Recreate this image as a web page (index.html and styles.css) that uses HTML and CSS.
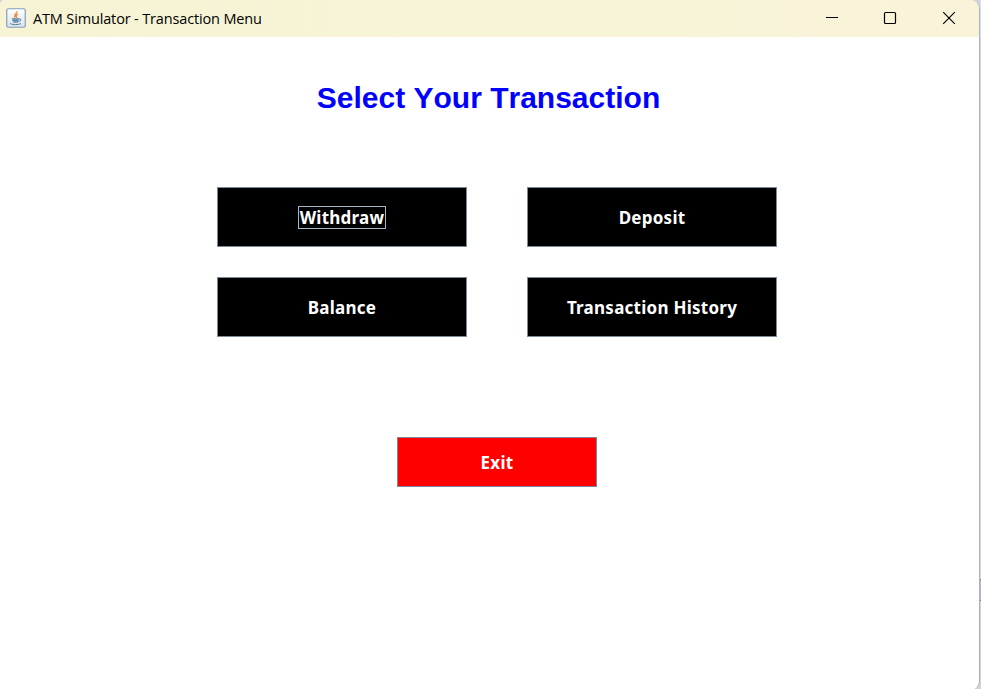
FILE: index.html
```html
<!DOCTYPE html>
<html lang="en">
<head>
<meta charset="utf-8">
<title>ATM Simulator - Transaction Menu</title>
<link rel="stylesheet" href="styles.css">
</head>
<body>
<div class="window">
  <header class="titlebar">
    <svg class="app-icon" width="20" height="20" viewBox="0 0 20 20" fill="none">
      <defs><linearGradient id="g" x2="0" y2="1"><stop stop-color="#fefefe"/><stop offset="1" stop-color="#d9e2ec"/></linearGradient></defs>
      <rect x=".75" y=".75" width="18.5" height="18.5" rx="1.5" fill="url(#g)" stroke="#829fba" stroke-width="1.2"/>
      <path d="M10.6 3.2c1.5 2-3.7 3.2-1.4 6.3M12 6.1c-2 1-2.2 1.8-1.2 3.7" stroke="#ee9145" stroke-width="1.5"/>
      <path d="M5.9 10.7h7.3l-1 3.4H7z" fill="#92afc8"/>
      <path d="M5.8 10.8h7.3M6.7 12.5h5.6M7.3 14.2h4.8M4.1 15.6c2.5 1.4 8.2 1.4 10.8 0M13 11c3-.6 2.2 2.1-.5 2.5" stroke="#55809f" stroke-width="1"/>
    </svg>
    <span class="caption">ATM Simulator - Transaction Menu</span>
    <nav class="controls">
      <svg width="58" height="36" viewBox="0 0 58 36" fill="none" stroke="#000"><path d="M23 17.5h12"/></svg>
      <svg width="58" height="36" viewBox="0 0 58 36" fill="none" stroke="#000" stroke-width="1.2"><rect x="23.5" y="12.5" width="11" height="11" rx="1"/></svg>
      <svg width="60" height="36" viewBox="0 0 60 36" fill="none" stroke="#000" stroke-width="1.15"><path d="M24.2 12.2l11.6 11.6M35.8 12.2L24.2 23.8"/></svg>
    </nav>
  </header>
  <main class="content">
    <h1 class="heading">Select Your Transaction</h1>
    <div class="menu">
      <button class="btn"><span class="focused">Withdraw</span></button>
      <button class="btn">Deposit</button>
      <button class="btn">Balance</button>
      <button class="btn">Transaction History</button>
    </div>
    <button class="btn exit">Exit</button>
  </main>
</div>
<div class="backdrop"></div>
</body>
</html>
```
FILE: styles.css
```css
* { box-sizing: border-box; }
body {
  margin: 0;
  width: 981px;
  height: 689px;
  display: flex;
  overflow: hidden;
  background: #d3d4d7;
}
.window {
  width: 980px;
  height: 690px;
  border-right: 1px solid #b0b1b5;
  border-radius: 5px 9px 9px 2px;
  background: #fff;
  overflow: hidden;
}
.titlebar {
  height: 37px;
  display: flex;
  align-items: flex-start;
  background: linear-gradient(90deg, #f6f4d5, #f8f4d8 70%, #f9f3da);
}
.app-icon { margin: 8px 7px 0 6px; }
.caption {
  font: 14.5px/38px "Open Sans", sans-serif;
  letter-spacing: -0.15px;
  color: #000;
  white-space: nowrap;
}
.controls { display: flex; margin-left: auto; }
.controls svg { display: block; }
.content {
  display: flex;
  flex-direction: column;
  align-items: center;
  padding: 41px 0 0 15px;
}
.heading {
  margin: 0 17px 0 0;
  font: bold 30px/40px "Liberation Sans", Arial, sans-serif;
  font-kerning: none;
  color: #00f;
  white-space: nowrap;
}
.menu {
  display: grid;
  grid-template-columns: 250px 250px;
  gap: 30px 60px;
  margin-top: 69px;
}
.btn {
  height: 60px;
  padding: 1px 0 0;
  border: 1px solid #7a8a99;
  background: #000;
  color: #fff;
  font: bold 17px/21px "Noto Sans", sans-serif;
  letter-spacing: 0.25px;
}
.focused {
  display: block;
  width: 88px;
  height: 23px;
  margin: -1px auto 0;
  border: 1px solid #a3b8cc;
  line-height: 22px;
}
.exit {
  width: 200px;
  height: 50px;
  margin-top: 100px;
  background: #f00;
}
.backdrop {
  width: 1px;
  height: 689px;
  background: linear-gradient(#d9e1ec 0 38px, #d8d8d8 38px 579px, #777 579px 580px, #b1b9d0 580px 600px, #6985a5 600px 601px, #d3d3d3 601px);
}
```
